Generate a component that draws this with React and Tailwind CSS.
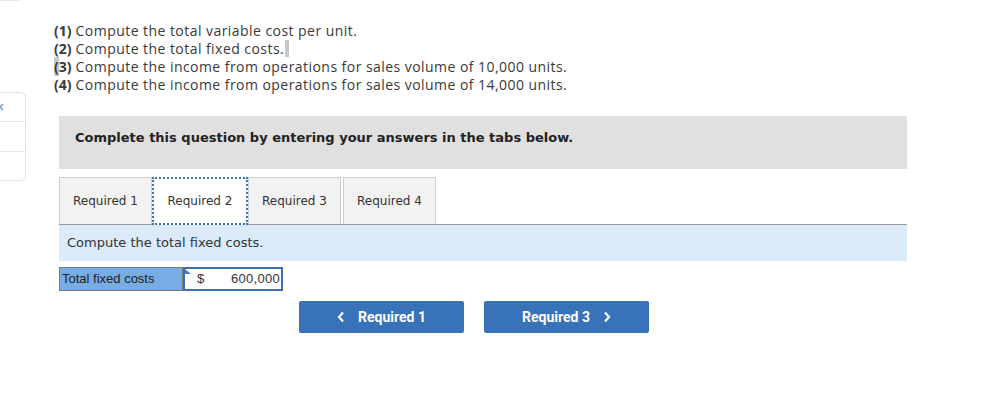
export default function App() {
  const tabs = ["Required 1", "Required 2", "Required 3", "Required 4"];
  return (
    <div className="relative h-[400px] w-[990px] overflow-hidden bg-white">
      {/* sidebar fragments at the left edge */}
      <div className="absolute left-0 top-[-20px] h-[21px] w-[22px] rounded-br-md border-b border-r border-[#e6e6e6]" />
      <div className="absolute left-[-8px] top-[92px] w-[34px] rounded-r-md border border-[#e3e3e3] bg-white">
        <div className="relative h-[29px] border-b border-[#e6e6e6]">
          <svg className="absolute left-[5px] top-[10px]" width="6" height="8" viewBox="0 0 6 8">
            <path d="M5 1 L2 4 L5 7" fill="none" stroke="#5b8fd6" strokeWidth="1.2" />
          </svg>
        </div>
        <div className="h-[30px] border-b border-[#e6e6e6]" />
        <div className="h-[28px]" />
      </div>

      <div className="pl-[54px] pt-[22px]">
        <div className="text-[14px] leading-[18px] tracking-[0.45px] text-[#3a3a3a]" style={{ fontFamily: "'Open Sans', Lato, sans-serif" }}>
          <p><b className="font-bold tracking-normal">(1)</b> Compute the total variable cost per unit.</p>
          <p>
            <b className="font-bold tracking-normal">(2)</b> Compute the total fixed costs.
            <span className="ml-[1px] inline-block h-[17px] w-[4px] align-[-3px] bg-[#c8c8c8]" />
          </p>
          <p>
            <b className="font-bold tracking-normal"><span className="bg-[#c8c8c8]">(</span>3)</b> Compute the income from operations for sales volume of 10,000 units.
          </p>
          <p><b className="font-bold tracking-normal">(4)</b> Compute the income from operations for sales volume of 14,000 units.</p>
        </div>

        <div className="ml-[5px] mt-[22px] w-[848px]" style={{ fontFamily: "Verdana, 'DejaVu Sans', sans-serif" }}>
          <div className="h-[53px] bg-[#e0e0e0] pl-[16px] pt-[14px] text-[13px] font-bold leading-[16px] text-[#222]">
            Complete this question by entering your answers in the tabs below.
          </div>

          <div className="mt-[8px] flex items-end border-b border-[#9a9a9a]">
            {tabs.map((t, i) =>
              i === 1 ? (
                <div
                  key={t}
                  className="-mb-px flex h-[48px] w-[96px] items-center justify-center border-2 border-dotted border-[#3a73c0] bg-white text-[12px] text-[#333]"
                >
                  {t}
                </div>
              ) : (
                <div
                  key={t}
                  className={`flex h-[47px] w-[93px] items-center justify-center border border-b-0 border-[#cfcfcf] bg-[#f2f2f2] text-[12px] text-[#333] ${i === 3 ? "ml-[2px]" : ""}`}
                >
                  {t}
                </div>
              )
            )}
          </div>

          <div className="flex h-[36px] items-center bg-[#dbebf9] pl-[8px] text-[13px] text-[#333]">
            Compute the total fixed costs.
          </div>

          <div className="mt-[6px] flex h-[24px] text-[13px]" style={{ fontFamily: "'Liberation Sans', Arial, sans-serif" }}>
            <div className="flex w-[124px] items-center border border-[#777] bg-[#78ace4] pl-[2px] text-[#222]">
              Total fixed costs
            </div>
            <div className="relative flex w-[100px] items-center justify-between border-2 border-[#3f6fae] bg-white pl-[12px] pr-[1px] text-[#333]">
              <span className="absolute left-0 top-0 h-0 w-0 border-l-[6px] border-t-[5px] border-l-[#3f7fd0] border-t-transparent" />
              <span>$</span>
              <span className="tracking-[0.3px]">600,000</span>
            </div>
          </div>

          <div className="mt-[10px] flex gap-[20px] pl-[240px] text-[14px] font-bold text-white" style={{ fontFamily: "Roboto, 'Liberation Sans', sans-serif" }}>
            <button className="flex h-[32px] w-[165px] items-center justify-center gap-[13px] rounded-[2px] bg-[#3872b8]">
              <svg width="8" height="12" viewBox="0 0 8 12"><path d="M6 1.5 L2 6 L6 10.5" fill="none" stroke="white" strokeWidth="2.2" /></svg>
              <span>Required 1</span>
            </button>
            <button className="flex h-[32px] w-[165px] items-center justify-center gap-[13px] rounded-[2px] bg-[#3872b8]">
              <span>Required 3</span>
              <svg width="8" height="12" viewBox="0 0 8 12"><path d="M2 1.5 L6 6 L2 10.5" fill="none" stroke="white" strokeWidth="2.2" /></svg>
            </button>
          </div>
        </div>
      </div>
    </div>
  );
}
